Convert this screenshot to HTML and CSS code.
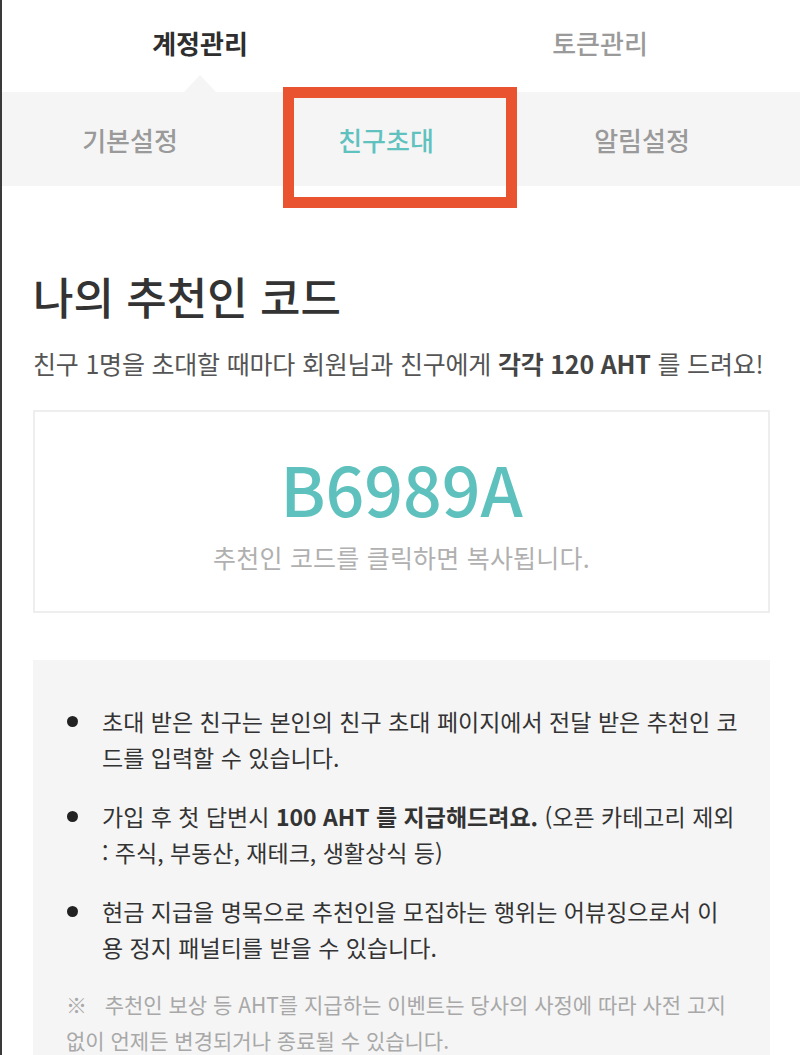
FILE: index.html
```html
<!DOCTYPE html>
<html lang="ko">
<head>
<meta charset="utf-8">
<title>친구초대</title>
<link rel="stylesheet" href="styles.css">
</head>
<body>
<div class="page">
  <nav class="tabs">
    <div class="tab tab-active">계정관리</div>
    <div class="tab">토큰관리</div>
  </nav>
  <nav class="subtabs">
    <div class="subtab">기본설정</div>
    <div class="subtab subtab-active">친구초대</div>
    <div class="subtab">알림설정</div>
    <div class="highlight"></div>
  </nav>
  <main class="content">
    <h1 class="title">나의 추천인 코드</h1>
    <p class="lead">친구 1명을 초대할 때마다 회원님과 친구에게 <b>각각 120 AHT</b> 를 드려요!</p>
    <div class="code-box">
      <div class="code">B6989A</div>
      <div class="code-hint">추천인 코드를 클릭하면 복사됩니다.</div>
    </div>
    <div class="info">
      <ul class="info-list">
        <li>초대 받은 친구는 본인의 친구 초대 페이지에서 전달 받은 추천인 코<br>드를 입력할 수 있습니다.</li>
        <li>가입 후 첫 답변시 <b>100 AHT 를 지급해드려요.</b> (오픈 카테고리 제외<br>: 주식, 부동산, 재테크, 생활상식 등)</li>
        <li>현금 지급을 명목으로 추천인을 모집하는 행위는 어뷰징으로서 이<br>용 정지 패널티를 받을 수 있습니다.</li>
      </ul>
      <p class="note">※&nbsp;&nbsp;&nbsp;추천인 보상 등 AHT를 지급하는 이벤트는 당사의 사정에 따라 사전 고지<br>없이 언제든 변경되거나 종료될 수 있습니다.</p>
    </div>
  </main>
</div>
</body>
</html>
```
FILE: styles.css
```css
html, body {
  margin: 0;
  padding: 0;
  background: #fff;
}
body {
  font-family: "Noto Sans CJK KR", "Noto Sans", sans-serif;
  color: #333;
}
.page {
  min-height: 1055px;
  border-left: 2px solid #3a3a3a;
  box-sizing: border-box;
  overflow: hidden;
}
.tabs {
  display: grid;
  grid-template-columns: 1fr 1fr;
  height: 92px;
  margin-left: -2px;
}
.tab {
  text-align: center;
  font-size: 26px;
  font-weight: 500;
  color: #9a9a9a;
  position: relative;
  height: 92px;
  line-height: 86px;
}
.tab-active {
  color: #2e2e2e;
  font-weight: 700;
}
.tab-active::after {
  content: "";
  position: absolute;
  left: 50%;
  bottom: 0;
  margin-left: -16px;
  border-left: 16px solid transparent;
  border-right: 16px solid transparent;
  border-bottom: 17px solid #f5f5f5;
}
.subtabs {
  position: relative;
  display: grid;
  grid-template-columns: repeat(3, 1fr);
  height: 94px;
  background: #f5f5f5;
  padding-right: 30px;
  align-items: center;
}
.subtab {
  text-align: center;
  font-size: 26px;
  font-weight: 500;
  color: #9a9a9a;
}
.subtab-active {
  color: #5fc2bf;
}
.highlight {
  position: absolute;
  left: 281px;
  top: -5px;
  width: 234px;
  height: 121px;
  border: 11px solid #ea532f;
  box-sizing: border-box;
}
.content {
  padding: 0 30px 0 31px;
}
.title {
  margin: 85px 0 0;
  font-size: 44px;
  font-weight: 500;
  line-height: 50px;
  color: #333;
}
.lead {
  margin: 24px 0 0;
  font-size: 25px;
  line-height: 36px;
  color: #555;
  letter-spacing: -0.2px;
  white-space: nowrap;
}
.lead b {
  font-weight: 700;
  color: #444;
}
.code-box {
  margin-top: 29px;
  height: 203px;
  border: 2px solid #eeeeee;
  box-sizing: border-box;
  text-align: center;
}
.code {
  margin-top: 34px;
  font-size: 68px;
  font-weight: 500;
  line-height: 84px;
  color: #5ec1bd;
}
.code-hint {
  margin-top: 11px;
  font-size: 25px;
  line-height: 32px;
  color: #b0b0b0;
  letter-spacing: 0.2px;
}
.info {
  margin-top: 47px;
  background: #f5f5f5;
  padding: 43px 16px 40px 33px;
}
.info-list {
  list-style: none;
  margin: 0;
  padding: 0;
}
.info-list li {
  position: relative;
  padding-left: 36px;
  font-size: 23px;
  line-height: 36px;
  color: #333;
  margin-bottom: 23px;
  word-break: break-all;
}
.info-list li:last-child {
  margin-bottom: 21px;
}
.info-list li::before {
  content: "";
  position: absolute;
  left: 1px;
  top: 13px;
  width: 11px;
  height: 11px;
  border-radius: 50%;
  background: #222;
}
.info-list b {
  font-weight: 700;
}
.note {
  margin: 0;
  font-size: 21px;
  line-height: 36px;
  color: #a8a8a8;
  word-break: break-all;
}
```
